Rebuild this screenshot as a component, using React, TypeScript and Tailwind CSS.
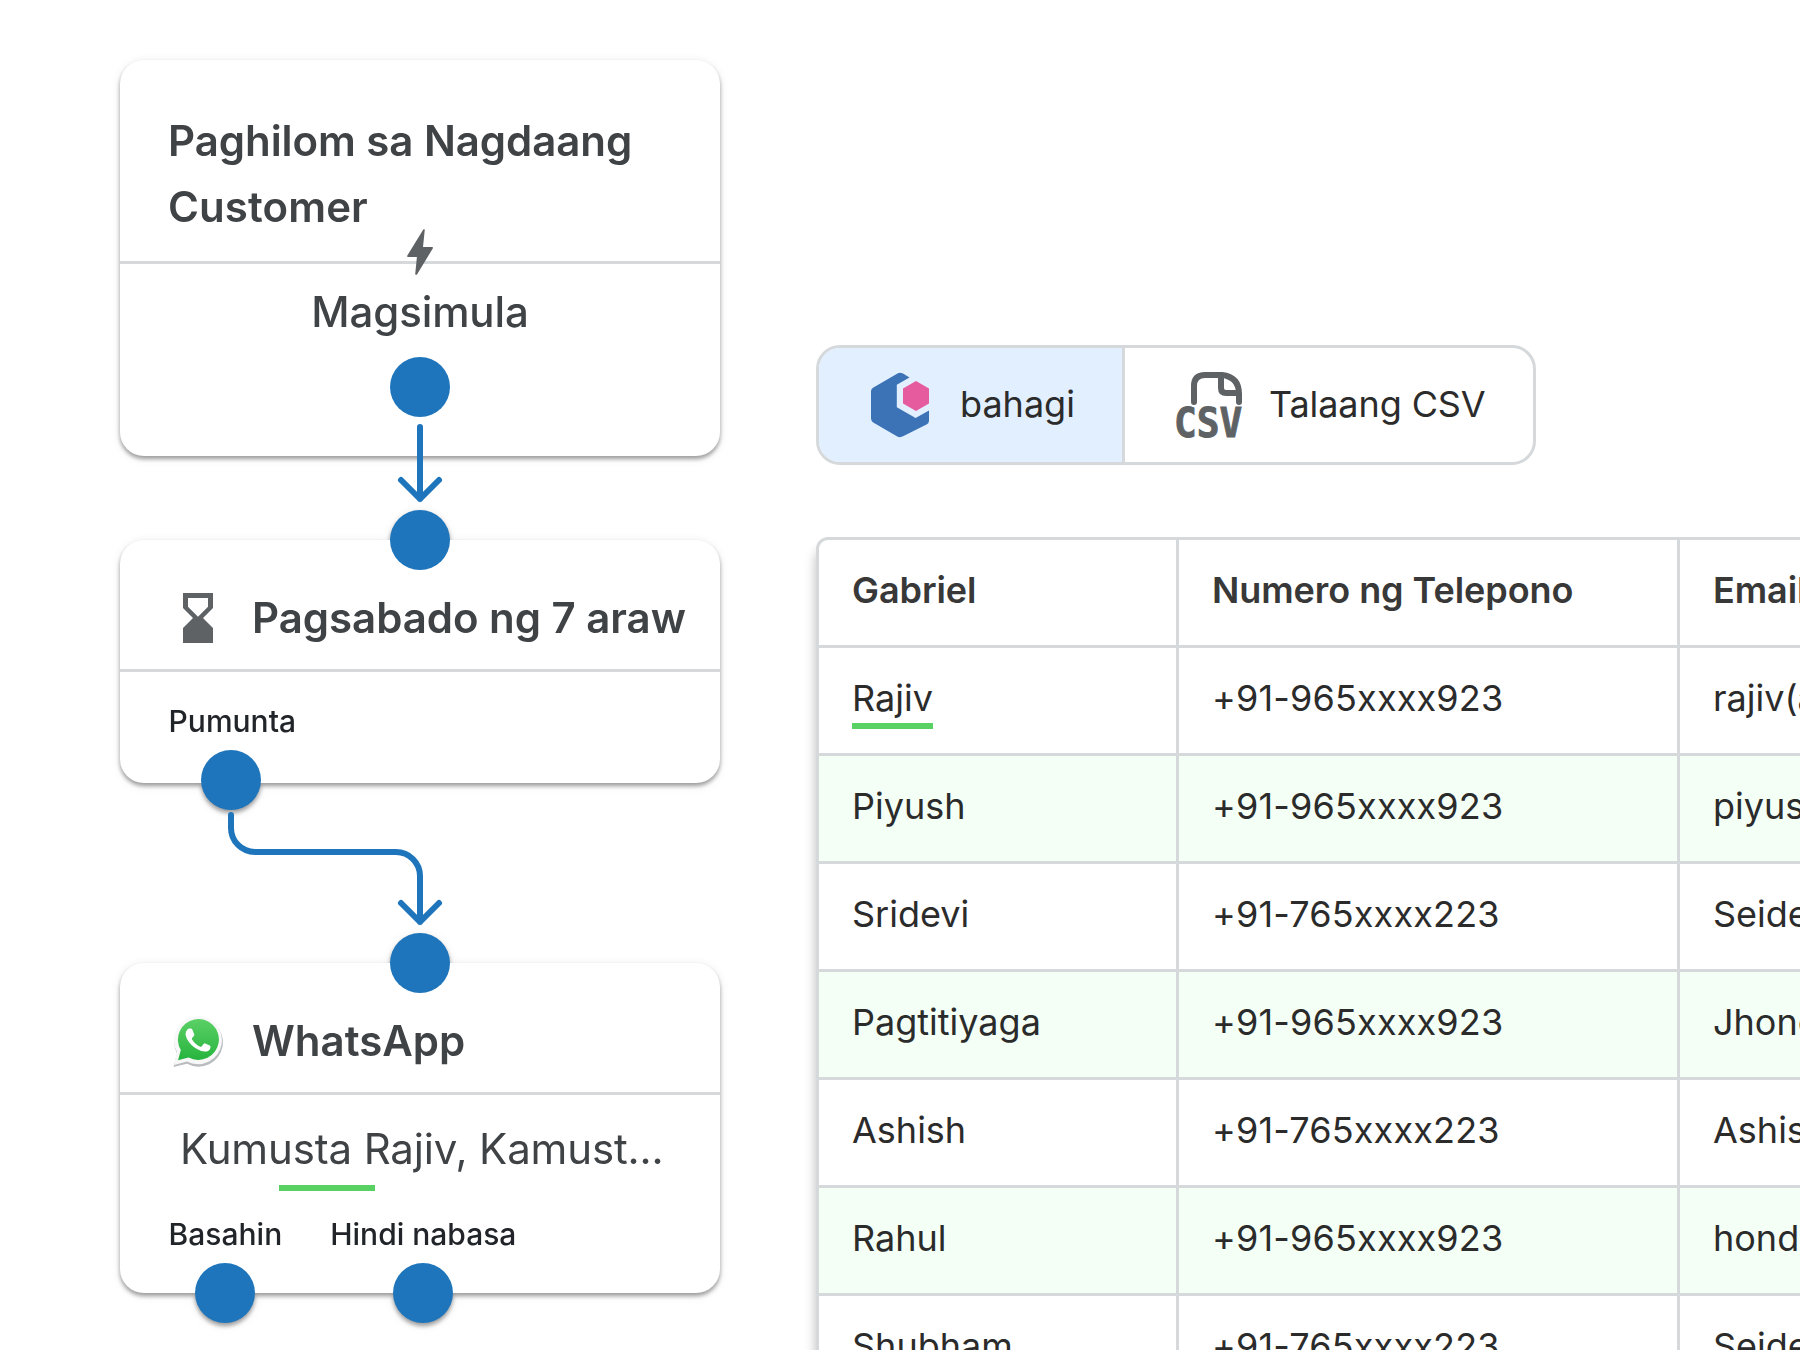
import type { ReactNode } from "react";

const HEADERS = ["Gabriel", "Numero ng Telepono", "Email"];

const ROWS = [
  ["Rajiv", "+91-965xxxx923", "rajiv(at)mail.com"],
  ["Piyush", "+91-965xxxx923", "piyush(at)mail.com"],
  ["Sridevi", "+91-765xxxx223", "Seidevi(at)mail.com"],
  ["Pagtitiyaga", "+91-965xxxx923", "Jhone(at)mail.com"],
  ["Ashish", "+91-765xxxx223", "Ashish(at)mail.com"],
  ["Rahul", "+91-965xxxx923", "honda(at)mail.com"],
  ["Shubham", "+91-765xxxx223", "Seidevi(at)mail.com"],
];

const CELL = [
  "border-r-[3px] border-[#d5d9dc]",
  "border-r-[3px] border-[#d5d9dc] tracking-[0.17px]",
  "",
];

function Port({ className }: { className: string }) {
  return <span className={`absolute size-[60px] rounded-full bg-[#1f75bb] ${className}`} />;
}

function Card({ className, children }: { className: string; children: ReactNode }) {
  return (
    <section
      className={`relative flex w-[600px] shrink-0 flex-col rounded-[24px] bg-white [filter:drop-shadow(0_3px_2px_rgba(0,0,0,0.36))_drop-shadow(0_1px_4px_rgba(0,0,0,0.08))] ${className}`}
    >
      {children}
    </section>
  );
}

function Bolt() {
  return (
    <svg className="absolute top-[168px] left-[286px]" width="28" height="48" viewBox="406 228 28 48">
      <path
        d="M424.8 229.6Q423.6 228.8 423 230L407.2 255.8Q406.9 256.8 408 256.9H416.9L415.2 274.2Q415.9 275.4 417 274.4L432.9 248.2Q433.2 247.1 432.2 247H423Z"
        fill="#5e6264"
      />
    </svg>
  );
}

function Hourglass() {
  return (
    <svg width="60" height="60" viewBox="0 0 24 24" fill="#5e6264">
      <path d="M18 22V16L14 12L18 8V2H6V8L10 12L6 16V22ZM8 7.5V4H16V7.5L12 11.5Z" />
    </svg>
  );
}

function WhatsApp() {
  return (
    <svg width="60" height="60" viewBox="168 1013 60 60">
      <defs>
        <linearGradient id="wa" x1="0" y1="0" x2="0" y2="1">
          <stop offset="0" stopColor="#5bd066" />
          <stop offset="1" stopColor="#27b43e" />
        </linearGradient>
      </defs>
      <path d="M173.5 1067L177 1053.5A24.3 24.3 0 1 1 187 1063.7Z" fill="#b9bdc0" />
      <path d="M174 1065L177 1052A24 24 0 1 1 187 1061.6Z" fill="#f8f8f8" />
      <path
        d="M178 1060.2L180.8 1050A20.5 20.5 0 1 1 188.6 1057.5Z"
        fill="url(#wa)"
      />
      <path
        d="M190.2 1028.6Q191.6 1028.2 192.3 1029.6L194.2 1034.2Q194.5 1035.1 193.9 1035.9L192.1 1038.1Q191.6 1038.8 192.1 1039.5Q195.1 1044.5 200.3 1046.7Q201.1 1047 201.6 1046.4L203.8 1043.7Q204.4 1043 205.2 1043.4L209.8 1045.6Q210.6 1046 210.5 1046.9Q210.2 1050.5 206.5 1051.4Q202.8 1052.3 197 1049Q190.4 1045.3 187 1039Q184 1033.2 187.4 1029.5Q188.5 1028.5 190.2 1028.6Z"
        fill="#ffffff"
      />
    </svg>
  );
}

function SegmentLogo() {
  return (
    <svg className="shrink-0" width="60" height="66" viewBox="870 372 60 66">
      <path
        d="M897.5 373.5Q900 372.1 903 373.6L909.5 377.4L896.8 384.8V407.2L915.6 418.1L929 410.4V420.5Q929 423 927 424.3L903 436.3Q900 437.9 897.3 436.4L873.2 422.4Q871 421 871 418.6V391.3Q871 389 873 387.8Z"
        fill="#3b73b6"
      />
      <path d="M916 381L929 388.5V403.4L916 411L903 403.4V388.5Z" fill="#e65b9e" />
    </svg>
  );
}

function CsvFile() {
  return (
    <svg className="shrink-0" width="68" height="68" viewBox="1175 371 68 68">
      <g fill="none" stroke="#5e6264" strokeWidth="6" strokeLinecap="round" strokeLinejoin="round">
        <path d="M1194 402V386Q1194 375 1205 375H1222Q1239 377 1239 394V402" />
        <path d="M1221 376V388Q1221 393 1226 393H1238" />
      </g>
      <text
        transform="translate(1174 437.4) scale(0.945 1)"
        fill="#5e6264"
        stroke="#5e6264"
        strokeWidth="0.9"
        className="font-['DejaVu_Sans_Mono',monospace] text-[40px] font-bold"
      >
        CSV
      </text>
    </svg>
  );
}

function StraightArrow() {
  return (
    <svg className="absolute top-[423px] left-[396px]" width="48" height="81" viewBox="396 423 48 81">
      <path
        d="M420 427V499M401 480L420 499L439 480"
        fill="none"
        stroke="#1f75bb"
        strokeWidth="6"
        strokeLinecap="round"
        strokeLinejoin="round"
      />
    </svg>
  );
}

function BentArrow() {
  return (
    <svg className="absolute top-[810px] left-[225px]" width="222" height="120" viewBox="225 810 222 120">
      <path
        d="M231 815V828A24 24 0 0 0 255 852H396A24 24 0 0 1 420 876V922M401 903L420 922L439 903"
        fill="none"
        stroke="#1f75bb"
        strokeWidth="6"
        strokeLinecap="round"
        strokeLinejoin="round"
      />
    </svg>
  );
}

export default function App() {
  return (
    <main className="relative flex h-[1350px] w-[1800px] overflow-hidden bg-white font-['Inter',sans-serif] text-[#3f4346]">
      <div className="flex w-[720px] shrink-0 flex-col pt-[60px] pl-[120px]">
        <Card className="h-[396px]">
          <h2 className="h-[204px] border-b-[3px] border-[#d5d9dc] pt-[48px] pl-[48px] text-[42px] leading-[66px] font-semibold">
            <span className="tracking-[-0.05px]">Paghilom sa Nagdaang</span>
            <br />
            <span className="tracking-[0.1px]">Customer</span>
          </h2>
          <p className="mt-[15px] text-center text-[42px] leading-[66px] font-medium tracking-[-0.1px]">Magsimula</p>
          <Bolt />
          <Port className="top-[297px] left-[270px]" />
        </Card>

        <Card className="mt-[84px] h-[243px]">
          <div className="flex h-[132px] border-b-[3px] border-[#d5d9dc] pt-[45px] pl-[48px]">
            <div className="mt-[3px] mr-[24px]">
              <Hourglass />
            </div>
            <h2 className="text-[42px] leading-[66px] font-semibold tracking-[-0.03px] whitespace-nowrap">
              Pagsabado ng 7 araw
            </h2>
          </div>
          <p className="mt-[25px] pl-[48.6px] text-[30px] leading-[48px] font-medium text-[#212529]">Pumunta</p>
          <Port className="-top-[30px] left-[270px]" />
          <Port className="top-[210px] left-[81px]" />
        </Card>

        <Card className="mt-[180px] h-[330px]">
          <div className="flex h-[132px] border-b-[3px] border-[#d5d9dc] pt-[45px] pl-[48px]">
            <div className="mt-[5px] mr-[24px]">
              <WhatsApp />
            </div>
            <h2 className="text-[42px] leading-[66px] font-semibold">WhatsApp</h2>
          </div>
          <p className="mt-[21px] pl-[60px] text-[42px] leading-[66px] tracking-[-0.14px] whitespace-nowrap">
            Kumusta Rajiv, Kamust...
          </p>
          <span className="mt-[3px] ml-[159px] h-[6px] w-[96px] bg-[#59d163]" />
          <div className="mt-[19px] flex gap-[48px] pl-[48.6px] text-[30px] leading-[48px] font-medium text-[#212529]">
            <span>Basahin</span>
            <span>Hindi nabasa</span>
          </div>
          <Port className="-top-[30px] left-[270px]" />
          <Port className="top-[300px] left-[75px]" />
          <Port className="top-[300px] left-[273px]" />
        </Card>
      </div>

      <div className="flex shrink-0 flex-col pt-[345px] pl-[96px]">
        <div className="flex h-[120px] w-[720px] shrink-0 rounded-[24px] border-[3px] border-[#d5d9dc] text-[36px] leading-[54px] text-[#2b2b2b]">
          <div className="flex w-[306px] shrink-0 items-center rounded-l-[21px] border-r-[3px] border-[#d5d9dc] bg-[#e2efff] pl-[51px]">
            <SegmentLogo />
            <span className="ml-[30px] pb-[2px]">bahagi</span>
          </div>
          <div className="flex items-center pl-[50px]">
            <CsvFile />
            <span className="ml-[26px] pb-[2px] tracking-[-0.1px] whitespace-nowrap">Talaang CSV</span>
          </div>
        </div>

        <div className="mt-[72px] w-[1320px] shrink-0 rounded-[12px] border-[3px] border-[#d5d9dc] bg-white text-[36px] leading-[54px] text-[#2b2b2b] shadow-[0_12px_12px_rgba(0,0,0,0.27)]">
          <div className="grid h-[108px] grid-cols-[360px_501px_1fr] border-b-[3px] border-[#d5d9dc] font-semibold tracking-[-0.06px] text-[#383838]">
            {HEADERS.map((h, i) => (
              <div key={h} className={`pt-[23px] pl-[33px] ${i < 2 ? "border-r-[3px] border-[#d5d9dc]" : ""}`}>
                {h}
              </div>
            ))}
          </div>
          {ROWS.map((row, r) => (
            <div
              key={row[0]}
              className={`grid h-[108px] grid-cols-[360px_501px_1fr] border-b-[3px] border-[#d5d9dc] ${r % 2 ? "bg-[#f4fff6]" : ""}`}
            >
              {row.map((cell, i) => (
                <div key={i} className={`pt-[23px] pl-[33px] ${CELL[i]}`}>
                  {cell}
                  {r === 0 && i === 0 && <div className="-mt-[2px] h-[6px] w-[81px] bg-[#59d163]" />}
                </div>
              ))}
            </div>
          ))}
        </div>
      </div>

      <StraightArrow />
      <BentArrow />
    </main>
  );
}
